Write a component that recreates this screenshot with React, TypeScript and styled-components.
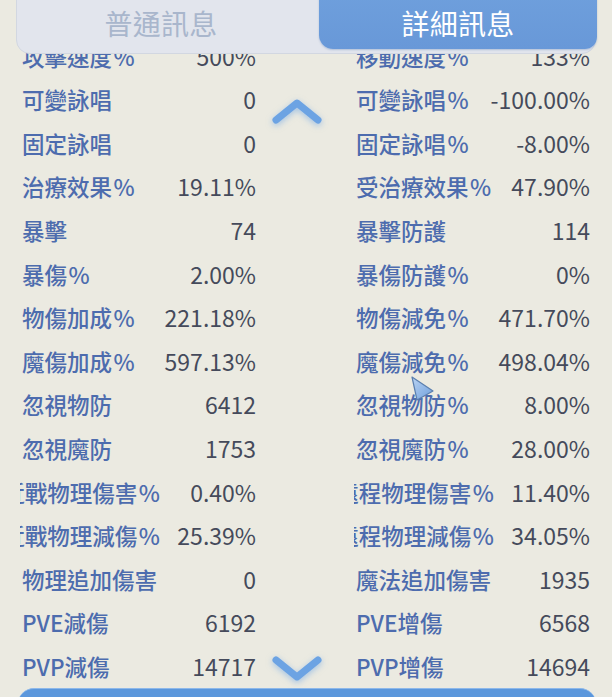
import React from 'react';
import styled, { createGlobalStyle } from 'styled-components';

const GlobalStyle = createGlobalStyle`
  html, body {
    margin: 0;
    padding: 0;
    height: 697px;
    overflow: hidden;
    background: #ebeae1;
    font-family: "Noto Sans CJK TC", "Noto Sans", sans-serif;
  }
`;

const Page = styled.div`
  position: relative;
  width: 612px;
  height: 697px;
  overflow: hidden;
  background: #ebeae1;
`;

const TabBar = styled.div`
  position: absolute;
  top: -14px;
  left: 16px;
  width: 580px;
  height: 68px;
  box-sizing: border-box;
  display: grid;
  grid-template-columns: 302px 278px;
  padding-bottom: 4px;
  background: #e2e5ed;
  border: 1px solid #d2d7e1;
  border-radius: 14px;
  z-index: 2;
`;

const Tab = styled.div<{ $active?: boolean }>`
  display: flex;
  align-items: center;
  justify-content: center;
  padding-top: 9px;
  padding-right: ${(p) => (p.$active ? '0' : '14px')};
  font-size: 28px;
  letter-spacing: 0.3px;
  color: ${(p) => (p.$active ? '#ffffff' : '#a9b6cc')};
  background: ${(p) => (p.$active ? 'linear-gradient(180deg, #6fa0dd 0%, #6898d8 100%)' : 'transparent')};
  border-radius: ${(p) => (p.$active ? '0 12px 12px 14px' : '0')};
  box-shadow: ${(p) => (p.$active ? '0 1px 2px rgba(80, 120, 180, 0.35)' : 'none')};
`;

const List = styled.div`
  padding-top: 33.8px;
`;

const Row = styled.div`
  display: grid;
  grid-template-columns: 1fr 1fr;
  column-gap: 100px;
  padding: 0 22px;
  height: 43.6px;
  align-items: center;
`;

const Cell = styled.div`
  display: flex;
  align-items: center;
  justify-content: space-between;
  min-width: 0;
`;

const Label = styled.div<{ $clip?: boolean }>`
  font-size: 22.5px;
  line-height: 30px;
  font-weight: 500;
  color: #4d6cae;
  white-space: nowrap;
  ${(p) =>
    p.$clip &&
    `
    width: 141px;
    margin-left: -2px;
    display: flex;
    justify-content: flex-end;
    overflow: hidden;
  `}
`;

const Pct = styled.span`
  margin: 0 1px 0 1.5px;
`;

const Value = styled.div`
  font-size: 23px;
  line-height: 30px;
  color: #454a5b;
  white-space: nowrap;
`;

const Chevron = styled.svg<{ $top: number }>`
  position: absolute;
  left: 269px;
  top: ${(p) => p.$top}px;
  width: 56px;
  height: 32px;
  filter: drop-shadow(0 2px 3px rgba(100, 160, 230, 0.55));
  z-index: 1;
`;

const Pointer = styled.svg`
  position: absolute;
  left: 409px;
  top: 374px;
  width: 28px;
  height: 30px;
  z-index: 3;
`;

const BottomBar = styled.div`
  margin: 0 16px 0 18px;
  height: 40px;
  background: #5b97dc;
  border-top: 1px solid #8db8ea;
  border-radius: 16px 16px 0 0;
`;

type Stat = { label: string; value: string; clip?: boolean };

const rows: [Stat, Stat][] = [
  [{ label: '攻擊速度%', value: '500%' }, { label: '移動速度%', value: '133%' }],
  [{ label: '可變詠唱', value: '0' }, { label: '可變詠唱%', value: '-100.00%' }],
  [{ label: '固定詠唱', value: '0' }, { label: '固定詠唱%', value: '-8.00%' }],
  [{ label: '治療效果%', value: '19.11%' }, { label: '受治療效果%', value: '47.90%' }],
  [{ label: '暴擊', value: '74' }, { label: '暴擊防護', value: '114' }],
  [{ label: '暴傷%', value: '2.00%' }, { label: '暴傷防護%', value: '0%' }],
  [{ label: '物傷加成%', value: '221.18%' }, { label: '物傷減免%', value: '471.70%' }],
  [{ label: '魔傷加成%', value: '597.13%' }, { label: '魔傷減免%', value: '498.04%' }],
  [{ label: '忽視物防', value: '6412' }, { label: '忽視物防%', value: '8.00%' }],
  [{ label: '忽視魔防', value: '1753' }, { label: '忽視魔防%', value: '28.00%' }],
  [
    { label: '近戰物理傷害%', value: '0.40%', clip: true },
    { label: '遠程物理傷害%', value: '11.40%', clip: true },
  ],
  [
    { label: '近戰物理減傷%', value: '25.39%', clip: true },
    { label: '遠程物理減傷%', value: '34.05%', clip: true },
  ],
  [{ label: '物理追加傷害', value: '0' }, { label: '魔法追加傷害', value: '1935' }],
  [{ label: 'PVE減傷', value: '6192' }, { label: 'PVE增傷', value: '6568' }],
  [{ label: 'PVP減傷', value: '14717' }, { label: 'PVP增傷', value: '14694' }],
];

const StatCell = ({ stat }: { stat: Stat }) => {
  const hasPct = stat.label.endsWith('%');
  const text = hasPct ? stat.label.slice(0, -1) : stat.label;
  return (
    <Cell>
      <Label $clip={stat.clip}>
        <span>
          {text}
          {hasPct && <Pct>%</Pct>}
        </span>
      </Label>
      <Value>{stat.value}</Value>
    </Cell>
  );
};

const App = () => {
  return (
    <Page>
      <GlobalStyle />
      <TabBar>
        <Tab>普通訊息</Tab>
        <Tab $active>詳細訊息</Tab>
      </TabBar>

      <Chevron $top={95} viewBox="0 0 56 32">
        <polyline
          points="7,25 28,8 49,25"
          fill="none"
          stroke="#6ca3e3"
          strokeWidth="7"
          strokeLinecap="round"
          strokeLinejoin="round"
        />
      </Chevron>
      <Chevron $top={652} viewBox="0 0 56 32">
        <polyline
          points="7,8 28,25 49,8"
          fill="none"
          stroke="#6ca3e3"
          strokeWidth="7"
          strokeLinecap="round"
          strokeLinejoin="round"
        />
      </Chevron>

      <List>
        {rows.map(([left, right], i) => (
          <Row key={i}>
            <StatCell stat={left} />
            <StatCell stat={right} />
          </Row>
        ))}
      </List>
      <BottomBar />

      <Pointer viewBox="0 0 28 30">
        <defs>
          <linearGradient id="ptr" x1="0" y1="0" x2="1" y2="1">
            <stop offset="0%" stopColor="#b9d3f2" />
            <stop offset="100%" stopColor="#6f9fdc" />
          </linearGradient>
        </defs>
        <polygon
          points="3,3 24,17 8,26"
          fill="url(#ptr)"
          stroke="#5b7fae"
          strokeWidth="1.2"
          strokeLinejoin="round"
        />
      </Pointer>
    </Page>
  );
};

export default App;
